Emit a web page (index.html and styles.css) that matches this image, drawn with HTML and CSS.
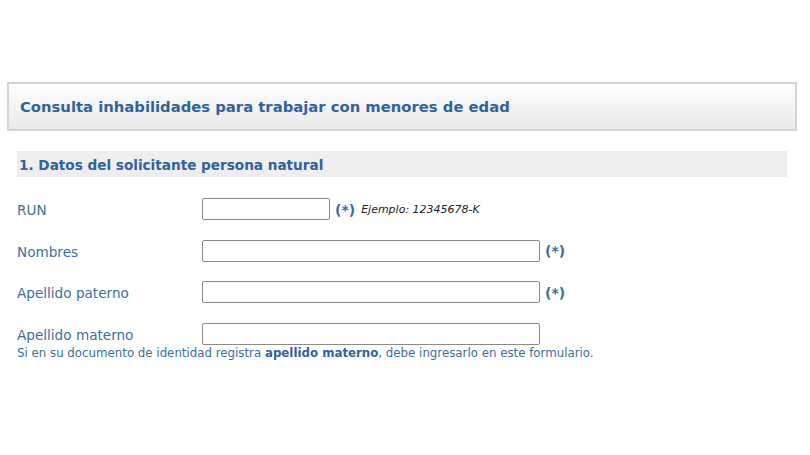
FILE: index.html
```html
<!DOCTYPE html>
<html lang="es">
<head>
    <meta charset="UTF-8">
    <title>Consulta inhabilidades</title>
    <link rel="stylesheet" href="styles.css">
</head>
<body>
    <div class="page">
        <div class="title-box">
            <h1>Consulta inhabilidades para trabajar con menores de edad</h1>
        </div>

        <div class="section">
            <h2>1. Datos del solicitante persona natural</h2>

            <div class="row">
                <label class="lbl" for="run">RUN</label>
                <input class="field short" id="run" type="text">
                <span class="req">(*)</span>
                <span class="hint">Ejemplo: 12345678-K</span>
            </div>
            <div class="row">
                <label class="lbl" for="nombres">Nombres</label>
                <input class="field" id="nombres" type="text">
                <span class="req">(*)</span>
            </div>
            <div class="row">
                <label class="lbl" for="paterno">Apellido paterno</label>
                <input class="field" id="paterno" type="text">
                <span class="req">(*)</span>
            </div>
            <div class="row last">
                <label class="lbl" for="materno">Apellido materno</label>
                <input class="field" id="materno" type="text">
            </div>
            <p class="note">Si en su documento de identidad registra <b>apellido materno</b>, debe ingresarlo en este formulario.</p>
        </div>
    </div>
</body>
</html>
```

FILE: styles.css
```css
body {
    margin: 0;
    font-family: "DejaVu Sans", Verdana, sans-serif;
    background: #fff;
}
.page {
    padding: 82px 13px 0 7px;
}
.title-box {
    height: 45px;
    border: 2px solid #d4d4d4;
    background: linear-gradient(#ffffff, #e9e9e9);
    display: flex;
    align-items: center;
    padding-left: 11px;
}
.title-box h1 {
    margin: 0;
    font-size: 14.8px;
    font-weight: bold;
    color: #2f62a0;
}
.section {
    margin: 20px 10px 0 10px;
}
.section h2 {
    margin: 0;
    height: 24px;
    padding-top: 2px;
    line-height: 24px;
    padding-left: 2px;
    background: #eeeeee;
    font-size: 13.6px;
    font-weight: bold;
    color: #2f62a0;
}
.row {
    display: flex;
    align-items: center;
    height: 22px;
    margin-top: 19.5px;
}
.section h2 + .row {
    margin-top: 21px;
}
.lbl {
    width: 185px;
    padding-top: 2px;
    font-size: 13.6px;
    color: #3b6da8;
}
.field {
    box-sizing: border-box;
    width: 338px;
    height: 22px;
    margin: 0;
    border: 1px solid #8a8a8a;
    border-radius: 2px;
    background: #fff;
}
.field.short {
    width: 128px;
}
.req {
    margin-left: 5px;
    padding-top: 1px;
    font-size: 14px;
    font-weight: bold;
    color: #3b6da8;
}
.hint {
    margin-left: 6px;
    font-size: 11px;
    font-style: italic;
    color: #222;
}
.row.last .lbl {
    padding-top: 3px;
}
.note {
    margin: 1px 0 0;
    font-size: 11.8px;
    color: #3b6da8;
}
.note b {
    color: #2f62a0;
}
```
